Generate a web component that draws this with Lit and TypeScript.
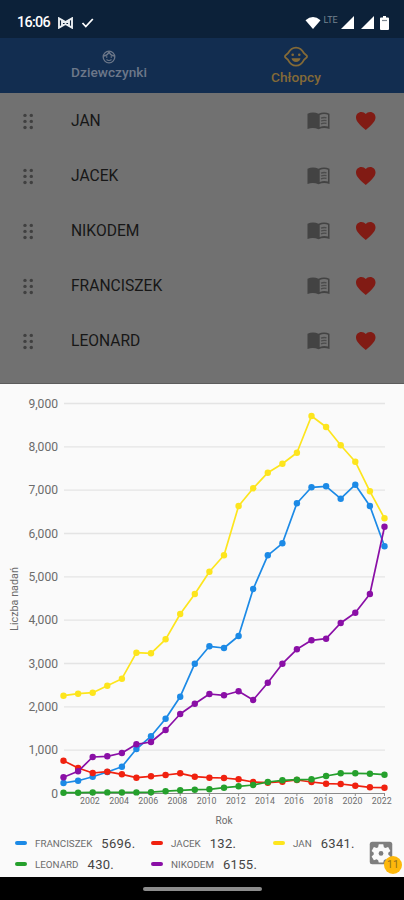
import { LitElement, html, svg, css } from "lit";
import { customElement } from "lit/decorators.js";

const X0 = 63.5;
const STEP = 14.59;
const BASE = 793.5 - 384;
const PER = 390 / 9000;

// Yearly counts, 2000 to 2022
const fromY = (ys: number[]) => ys.map((y) => Math.round((793.5 - y) / PER));
const SERIES = [
  { name: "FRANCISZEK", value: "5696.", color: "#1c8ae6", data: fromY([783, 780.7, 776.7, 772, 766.7, 749, 736.3, 718.7, 696.7, 663.7, 646.3, 648, 636, 589, 555.3, 543.3, 503.3, 487.3, 486.3, 498.7, 484.7, 506, 546.3]) },
  { name: "JACEK", value: "132.", color: "#f0210f", data: fromY([760.7, 768, 773, 771.7, 774.3, 777.7, 776.3, 775, 773.3, 776.7, 777.7, 778, 779.3, 782, 782.7, 781.7, 780, 782, 783.7, 784, 785.7, 787.3, 787.7]) },
  { name: "JAN", value: "6341.", color: "#fde51d", data: fromY([695.7, 693.7, 692.7, 685.7, 678.7, 652.7, 653.3, 639.3, 614, 594, 571.7, 555.3, 506, 488.3, 472.7, 463.7, 452.7, 416, 427, 445.3, 461.7, 491.3, 518.3]) },
  { name: "NIKODEM", value: "6155.", color: "#8a0fa6", data: fromY([777.3, 771.3, 757, 756.3, 753, 744.3, 742, 730, 714, 703.7, 694, 695.3, 691.3, 700, 682.7, 663.7, 649.3, 640.3, 638.7, 623, 612.7, 594, 526.7]) },
  { name: "LEONARD", value: "430.", color: "#25a02c", data: fromY([792.7, 792.7, 792.4, 792.4, 792.4, 792.4, 792.2, 791.2, 790.3, 789.7, 789.3, 787.7, 786.3, 785, 782, 780.3, 779.7, 779.3, 776, 773.3, 773.3, 773.7, 774.7]) },
];
const NAMES = ["JAN", "JACEK", "NIKODEM", "FRANCISZEK", "LEONARD"];
const LEGEND = [[SERIES[0], SERIES[1], SERIES[2]], [SERIES[4], SERIES[3]]];

@customElement("name-chart")
export class NameChart extends LitElement {
  static styles = css`
    :host { display: block; height: 448px; flex: none; }
    svg { display: block; }
    text { font-family: Roboto, sans-serif; fill: #6c6c6c; }
    .y { font-size: 12.1px; text-anchor: end; }
    .x { font-size: 8.8px; text-anchor: middle; }
    .title { font-size: 10px; text-anchor: middle; }
    .vertical { font-size: 10.8px; }
    .grid { stroke: #e4e4e4; stroke-width: 1.3; }
    .axis { stroke: #8c8c8c; stroke-width: 1; }
    .line { fill: none; stroke-width: 1.7; stroke-linejoin: round; }
  `;
  render() {
    const px = (i: number) => +(X0 + i * STEP).toFixed(1);
    const py = (v: number) => +(BASE - v * PER).toFixed(1);
    return html`<svg width="404" height="448" viewBox="0 0 404 448">
      ${[0, 1, 2, 3, 4, 5, 6, 7, 8, 9].map((k) => svg`
        <line class=${k ? "grid" : "axis"} x1="64" x2="385" y1=${py(k * 1000)} y2=${py(k * 1000)}></line>
        <text class="y" x="58" y=${py(k * 1000) + 4.2}>${k ? `${k},000` : "0"}</text>`)}
      ${[2, 4, 6, 8, 10, 12, 14, 16, 18, 20, 22].map((i) => svg`
        <line class="axis" x1=${px(i)} x2=${px(i)} y1=${BASE} y2=${BASE + 2.5}></line>
        <text class="x" x=${px(i) - 2.8} y="419.8">${2000 + i}</text>`)}
      ${[0, 1, 3, 2, 4].map((n) => SERIES[n]).map((s) => svg`
        <polyline class="line" stroke=${s.color} points=${s.data.map((v, i) => `${px(i)},${py(v)}`).join(" ")}></polyline>
        ${s.data.map((v, i) => svg`<circle cx=${px(i)} cy=${py(v)} r="3.2" fill=${s.color}></circle>`)}`)}
      <text class="title" x="224" y="439.5">Rok</text>
      <text class="title vertical" transform="translate(18 215) rotate(-90)">Liczba nadań</text>
    </svg>`;
  }
}

@customElement("app-root")
export class AppRoot extends LitElement {
  static styles = css`
    :host { display: flex; flex-direction: column; width: 404px; height: 900px; overflow: hidden; font-family: Roboto, sans-serif; background: #fafafa; }
    svg { display: block; flex: none; }
    .status { box-sizing: border-box; height: 38px; flex: none; background: #0c2139; display: flex; align-items: center; padding: 7px 13.5px 0 17px; color: #fff; }
    .clock { font-size: 14.4px; font-weight: 500; width: 33px; letter-spacing: -.7px; margin-right: 8px; }
    .check { margin-left: 8px; }
    .signal { margin-left: 7px; }
    .battery { margin: 0 2px 0 6px; }
    .gap { flex: 1; }
    .lte { font-size: 9px; color: #75818f; padding-left: 3px; width: 17px; margin-bottom: 5px; }
    .tabs { height: 55px; flex: none; background: #122d50; display: grid; grid-template-columns: 218px 156px; }
    .tab { display: flex; flex-direction: column; align-items: center; font-size: 13.7px; font-weight: 500; line-height: 15px; color: #6c7789; }
    .girls { padding-top: 12px; }
    .boys { color: #846a37; padding-top: 8px; }
    .boys span { margin-top: 2px; }
    .girls span { margin-top: 1px; }
    .list { height: 291px; flex: none; box-sizing: border-box; background: #717171; border-bottom: 1px solid #5c5c5c; overflow: hidden; padding-top: .5px; }
    .row { height: 55.1px; display: flex; align-items: center; padding-left: 23px; }
    .name { font-size: 15.6px; color: #171717; margin-left: 38px; width: 236px; }
    .heart { margin-left: 26px; }
    .legend { height: 45px; flex: none; box-sizing: border-box; display: flex; flex-direction: column; padding: 1px 0 0 15px; gap: 1px; position: relative; }
    .legendrow { display: grid; grid-template-columns: 136px 122px 100px; height: 20px; }
    .item { display: flex; align-items: center; }
    .mark { width: 12px; height: 4px; border-radius: 2px; }
    .label { font-size: 9.8px; color: #6c6c6c; margin: 0 9px 0 8px; }
    .value { font-size: 13px; color: #444; letter-spacing: .3px; }
    .settings { position: absolute; left: 366px; top: 6px; }
    .badge { position: absolute; left: 384px; top: 24px; width: 18px; height: 18px; border-radius: 50%; background: #fdb80b; color: #94701b; font-size: 10.5px; line-height: 18px; text-align: center; }
    .nav { flex: 1; background: #000; display: flex; justify-content: center; align-items: center; }
    .pill { width: 119px; height: 4px; border-radius: 2px; background: #8c8c8c; }
  `;

  render() {
    return html`
      <div class="status">
        <span class="clock">16:06</span>
        <svg width="15" height="12" viewBox="0 0 15 12" fill="none" stroke="#e9edf0" stroke-width="1.9"><path d="M1 1.3 7.5 5 14 1.3v9.4L7.5 7 1 10.7zM4 3v6M11 3v6M4 3l7 6M11 3 4 9"/></svg>
        <svg class="check" width="13" height="12" viewBox="0 0 13 12" fill="none" stroke="#fff" stroke-width="1.8"><path d="m1.500 6 3.300 3.500 7-7.500"/></svg>
        <span class="gap"></span>
        <svg width="16" height="14" viewBox="0 0 17 14" fill="#fff"><path d="M.5 4Q8.500-2.500 16.500 4L8.500 13.500z"/></svg>
        <span class="lte">LTE</span>
        <svg width="13" height="13" viewBox="0 0 13 13" fill="#fff"><path d="M13 0v13H0z"/></svg>
        <svg class="signal" width="13" height="13" viewBox="0 0 13 13" fill="#fff"><path d="M13 0v13H0z"/></svg>
        <svg class="battery" width="9" height="14" viewBox="0 0 9 14" fill="#fff"><path d="M3 0h3v1.500h2q1 0 1 1V13q0 1-1 1H1q-1 0-1-1V2.500q0-1 1-1h2z"/><path d="M2 4.500h5" stroke="#7d8791" stroke-width="1.200"/></svg>
      </div>
      <div class="tabs">
        <div class="tab girls">
          <svg width="14" height="14" viewBox="0 0 14 14" fill="none" stroke="#6c7789" stroke-width="1.300"><circle cx="7" cy="7" r="5.800"/><path d="M1.500 6Q6 5.500 7 1.500 8 5.500 12.500 6"/><path d="M4.500 9.500Q7 11.500 9.500 9.500" stroke-width="1.100"/><path d="M4.700 6.200v1.600M9.300 6.200v1.600"/></svg>
          <span>Dziewczynki</span>
        </div>
        <div class="tab boys">
          <svg width="24" height="22" viewBox="0 0 24 22" fill="none" stroke="#846a37" stroke-width="1.800"><path d="M4 7.200Q7 1.600 12 1.600T20 7.200L22.700 9.600Q23.300 10.500 22.700 11.400L20 13.800Q17 19.600 12 19.600T4 13.800L1.300 11.400Q.7 10.500 1.300 9.600z"/><path d="M7.500 12.200h9Q15.500 16 12 16T7.500 12.200z" fill="#846a37" stroke="none"/><circle cx="8.700" cy="8.700" r="1.300" fill="#846a37" stroke="none"/><circle cx="15.300" cy="8.700" r="1.300" fill="#846a37" stroke="none"/></svg>
          <span>Chłopcy</span>
        </div>
      </div>
      <div class="list">
        ${NAMES.map((n) => html`<div class="row">
          <svg width="10" height="17" viewBox="0 0 10 17" fill="#404040">${[2, 8.3].map((x) => [2.4, 8.4, 14.5].map((y) => svg`<circle cx=${x} cy=${y} r="1.7"></circle>`))}</svg>
          <span class="name">${n}</span>
          <svg width="23" height="18" viewBox="0 0 23 18"><path d="M.5 1.800Q6-.6 11.500 1.800 17-.6 22.500 1.800V17Q17 14.800 11.500 17.200 6 14.800.5 17z" fill="#434343"/><path d="M12.700 3Q17 1.300 21 2.800V14.600Q17 13.300 12.700 15z" fill="#717171"/><path d="M14 6.200Q17 5 19.500 5.800M14 9Q17 7.800 19.500 8.600M14 11.800Q17 10.600 19.500 11.400" fill="none" stroke="#4c4c4c" stroke-width="1.300"/></svg>
          <svg class="heart" width="19.500" height="18" viewBox="2 3 20 18.350" preserveAspectRatio="none" fill="#811b14"><path d="m12 21.350-1.450-1.320C5.400 15.360 2 12.280 2 8.500 2 5.420 4.420 3 7.500 3c1.740 0 3.410.81 4.500 2.090C13.090 3.810 14.760 3 16.500 3 19.580 3 22 5.420 22 8.500c0 3.780-3.400 6.860-8.550 11.540z"/></svg>
        </div>`)}
      </div>
      <name-chart></name-chart>
      <div class="legend">
        ${LEGEND.map((r) => html`<div class="legendrow">${r.map((s) => html`<div class="item"><span class="mark" style="background:${s.color}"></span><span class="label">${s.name}</span><span class="value">${s.value}</span></div>`)}</div>`)}
        <svg class="settings" width="30" height="30" viewBox="0 0 24 24" fill="#7e7e7e"><path d="M5 3h14a2 2 0 0 1 2 2v14a2 2 0 0 1-2 2H5a2 2 0 0 1-2-2V5a2 2 0 0 1 2-2z"/><path fill="#fafafa" d="M10.200 5h3.600l.5 2.300 1.200.7 2.200-.8 1.800 3.100-1.700 1.500v1.400l1.700 1.500-1.800 3.100-2.200-.8-1.200.7-.5 1.900h-3.600l-.5-1.900-1.200-.7-2.200.8-1.800-3.100 1.700-1.500v-1.400L4.500 10.300l1.800-3.100 2.200.8 1.200-.7z"/><circle cx="12" cy="12.300" r="1.900"/></svg>
        <span class="badge">11</span>
      </div>
      <div class="nav"><span class="pill"></span></div>
    `;
  }
}
